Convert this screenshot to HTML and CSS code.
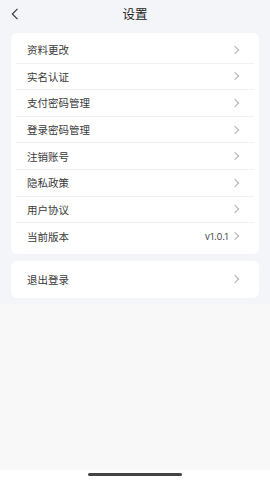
FILE: index.html
```html
<!DOCTYPE html>
<html lang="zh-CN">
  <head>
    <meta charset="UTF-8" />
    <meta name="viewport" content="width=device-width, initial-scale=1.0" />
    <title>设置</title>
    <link rel="stylesheet" href="styles.css">
  </head>
  <body>
    <div class="page">
      <div class="top">
        <header class="nav">
          <button class="back">
            <svg width="8" height="12" viewBox="0 0 8 12"><path d="M6.5 0.8 L1.3 6 L6.5 11.2" fill="none" stroke="#333" stroke-width="1.1"/></svg>
          </button>
          <h1>设置</h1>
        </header>
        <div class="list">
          <ul class="card">
            <li class="row"><span>资料更改</span><i class="arrow"></i></li>
            <li class="row"><span>实名认证</span><i class="arrow"></i></li>
            <li class="row"><span>支付密码管理</span><i class="arrow"></i></li>
            <li class="row"><span>登录密码管理</span><i class="arrow"></i></li>
            <li class="row"><span>注销账号</span><i class="arrow"></i></li>
            <li class="row"><span>隐私政策</span><i class="arrow"></i></li>
            <li class="row"><span>用户协议</span><i class="arrow"></i></li>
            <li class="row"><span>当前版本</span><em class="version">v1.0.1</em><i class="arrow"></i></li>
          </ul>
          <ul class="card single">
            <li class="row"><span>退出登录</span><i class="arrow"></i></li>
          </ul>
        </div>
      </div>
      <div class="rest"></div>
      <div class="home-bar"><span></span></div>
    </div>
  </body>
</html>
```

FILE: styles.css
```css
* {
  box-sizing: border-box;
}

body {
  margin: 0;
  font-family: "Noto Sans CJK SC", "Noto Sans", sans-serif;
  color: #3a3a3a;
}

ul {
  margin: 0;
  padding: 0;
  list-style: none;
}

button {
  margin: 0;
  padding: 0;
  background: none;
  border: none;
}

.page {
  width: 270px;
  height: 480px;
  display: flex;
  flex-direction: column;
  background: #f8f8f8;
}

.top {
  background: #f4f5f9;
  padding-bottom: 6px;
}

.nav {
  height: 28px;
  display: flex;
  align-items: center;
  justify-content: center;
  position: relative;
}

.nav h1 {
  margin: 0 0 1px;
  font-size: 12.5px;
  font-weight: 400;
  color: #222;
}

.back {
  position: absolute;
  left: 11px;
  top: 8px;
  display: flex;
}

.list {
  display: flex;
  flex-direction: column;
  gap: 7px;
  padding: 5px 11px 0;
}

.card {
  background: #fff;
  border-radius: 6px;
  padding: 4px 5px;
}

.card.single {
  padding: 0 5px;
}

.card.single .row {
  height: 37px;
}

.row {
  height: 26.6px;
  display: flex;
  align-items: center;
  padding: 0 15px 0 11px;
  font-size: 10.5px;
  border-bottom: 1px solid #f0f0f0;
}

.row:last-child {
  border-bottom: none;
}

.row span {
  flex: 1;
}

.version {
  font-style: normal;
  font-size: 9.5px;
  color: #555;
  margin-right: 4px;
  font-family: "Inter", "Noto Sans", sans-serif;
}

.arrow {
  width: 6px;
  height: 6px;
  border-top: 1px solid #b0b0b0;
  border-right: 1px solid #b0b0b0;
  transform: rotate(45deg);
  margin-right: 1px;
}

.rest {
  flex: 1;
}

.home-bar {
  height: 10px;
  background: #fff;
  display: flex;
  justify-content: center;
  padding-top: 3px;
}

.home-bar span {
  width: 94px;
  height: 2.5px;
  border-radius: 2px;
  background: #444;
}
```
